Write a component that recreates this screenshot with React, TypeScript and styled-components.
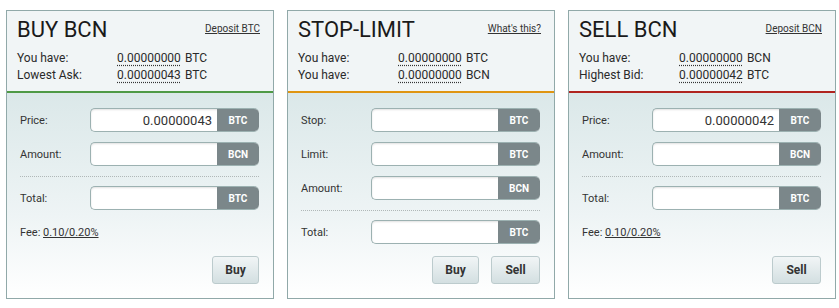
import React from 'react';
import styled, { createGlobalStyle } from 'styled-components';

const GlobalStyle = createGlobalStyle`
  body {
    margin: 0;
    background: #ffffff;
    font-family: Roboto, "Liberation Sans", Arial, sans-serif;
    color: #222;
  }
`;

const Board = styled.div`
  display: grid;
  grid-template-columns: repeat(3, 268px);
  gap: 13px;
  padding: 10px 0 0 6px;
`;

const Panel = styled.div`
  border: 1px solid #91a9a9;
  display: flex;
  flex-direction: column;
  height: 287px;
`;

const Header = styled.div<{ accent: string }>`
  background: #f1f5f6;
  padding: 6px 13px 7px 10px;
  border-bottom: 2px solid ${({ accent }) => accent};
`;

const TitleRow = styled.div`
  display: flex;
  justify-content: space-between;
  align-items: flex-start;
`;

const Title = styled.h2`
  margin: 0;
  font-size: 22px;
  line-height: 25px;
  font-weight: 400;
  color: #1a1a1a;
`;

const HelpLink = styled.a`
  margin-top: 6px;
  font-size: 10px;
  line-height: 12px;
  color: #333;
  text-decoration: underline;
`;

const Balances = styled.div`
  margin-top: 8px;
`;

const BalanceRow = styled.div`
  display: flex;
  font-size: 12px;
  line-height: 17px;
  color: #2a2a2a;
`;

const BalanceLabel = styled.span`
  width: 100px;
`;

const Amount = styled.span`
  text-decoration: underline dotted #333;
  text-underline-offset: 3px;
  margin-right: 4px;
`;

const Body = styled.div`
  flex: 1;
  display: flex;
  flex-direction: column;
  padding: 15px 14px 14px 13px;
  background: linear-gradient(to bottom, #dbe8e9 0%, #eef4f5 60%, #ffffff 100%);
`;

const FieldRow = styled.div`
  display: flex;
  align-items: center;
  height: 24px;
  & + & {
    margin-top: 10px;
  }
`;

const FieldLabel = styled.label`
  width: 70px;
  font-size: 11px;
  color: #333;
`;

const InputBox = styled.div`
  flex: 1;
  display: flex;
  height: 24px;
  box-sizing: border-box;
  border: 1px solid #9cb1b1;
  border-right: none;
  border-radius: 5px;
  background: #fff;
  box-shadow: inset 0 1px 2px rgba(0, 0, 0, 0.12);
  overflow: hidden;
`;

const Input = styled.input`
  flex: 1;
  min-width: 0;
  border: none;
  outline: none;
  background: transparent;
  text-align: right;
  padding: 0 5px 0 4px;
  font-family: Roboto, "Liberation Sans", Arial, sans-serif;
  font-size: 13px;
  color: #333;
`;

const Suffix = styled.span`
  width: 42px;
  background: #7b878a;
  color: #fff;
  font-size: 10px;
  font-weight: 700;
  display: flex;
  align-items: center;
  justify-content: center;
  margin: -1px 0;
  border-radius: 0 5px 5px 0;
`;

const Divider = styled.div`
  border-top: 1px dotted #b0b8b8;
  margin: 10px 0 9px;
`;

const Fee = styled.div`
  margin-top: 16px;
  font-size: 11px;
  line-height: 14px;
  color: #333;
  a {
    color: #333;
    text-decoration: underline;
  }
`;

const Actions = styled.div`
  margin-top: auto;
  display: flex;
  justify-content: flex-end;
  gap: 12px;
`;

const ActionButton = styled.button<{ w: number }>`
  width: ${({ w }) => w}px;
  height: 28px;
  border: 1px solid #bccbcd;
  border-radius: 3px;
  background: linear-gradient(to bottom, #f1f5f6, #d3dfe1);
  font-family: Roboto, "Liberation Sans", Arial, sans-serif;
  font-size: 12px;
  font-weight: 700;
  color: #333;
  cursor: pointer;
`;

type Field = { label: string; unit: string; value?: string };

const FieldGroup: React.FC<{ fields: Field[] }> = ({ fields }) => (
  <>
    {fields.map((f) => (
      <FieldRow key={f.label}>
        <FieldLabel>{f.label}</FieldLabel>
        <InputBox>
          <Input defaultValue={f.value || ''} />
          <Suffix>{f.unit}</Suffix>
        </InputBox>
      </FieldRow>
    ))}
  </>
);

const panels = [
  {
    title: 'BUY BCN',
    link: 'Deposit BTC',
    accent: '#4f9a46',
    balances: [
      ['You have:', '0.00000000', 'BTC'],
      ['Lowest Ask:', '0.00000043', 'BTC'],
    ],
    fields: [
      { label: 'Price:', unit: 'BTC', value: '0.00000043' },
      { label: 'Amount:', unit: 'BCN' },
    ],
    fee: true,
    buttons: [['Buy', 47]],
  },
  {
    title: 'STOP-LIMIT',
    link: "What's this?",
    accent: '#df9512',
    balances: [
      ['You have:', '0.00000000', 'BTC'],
      ['You have:', '0.00000000', 'BCN'],
    ],
    fields: [
      { label: 'Stop:', unit: 'BTC' },
      { label: 'Limit:', unit: 'BTC' },
      { label: 'Amount:', unit: 'BCN' },
    ],
    fee: false,
    buttons: [['Buy', 47], ['Sell', 49]],
  },
  {
    title: 'SELL BCN',
    link: 'Deposit BCN',
    accent: '#b0241f',
    balances: [
      ['You have:', '0.00000000', 'BCN'],
      ['Highest Bid:', '0.00000042', 'BTC'],
    ],
    fields: [
      { label: 'Price:', unit: 'BTC', value: '0.00000042' },
      { label: 'Amount:', unit: 'BCN' },
    ],
    fee: true,
    buttons: [['Sell', 49]],
  },
];

const App: React.FC = () => (
  <>
    <GlobalStyle />
    <Board>
      {panels.map((p) => (
        <Panel key={p.title}>
          <Header accent={p.accent}>
            <TitleRow>
              <Title>{p.title}</Title>
              <HelpLink href="#">{p.link}</HelpLink>
            </TitleRow>
            <Balances>
              {p.balances.map(([label, amount, unit], i) => (
                <BalanceRow key={i}>
                  <BalanceLabel>{label}</BalanceLabel>
                  <Amount>{amount}</Amount>
                  {unit}
                </BalanceRow>
              ))}
            </Balances>
          </Header>
          <Body>
            <FieldGroup fields={p.fields} />
            <Divider />
            <FieldGroup fields={[{ label: 'Total:', unit: 'BTC' }]} />
            {p.fee && (
              <Fee>
                Fee: <a href="#">0.10/0.20%</a>
              </Fee>
            )}
            <Actions>
              {p.buttons.map(([label, w]) => (
                <ActionButton key={label as string} w={w as number}>
                  {label}
                </ActionButton>
              ))}
            </Actions>
          </Body>
        </Panel>
      ))}
    </Board>
  </>
);

export default App;
